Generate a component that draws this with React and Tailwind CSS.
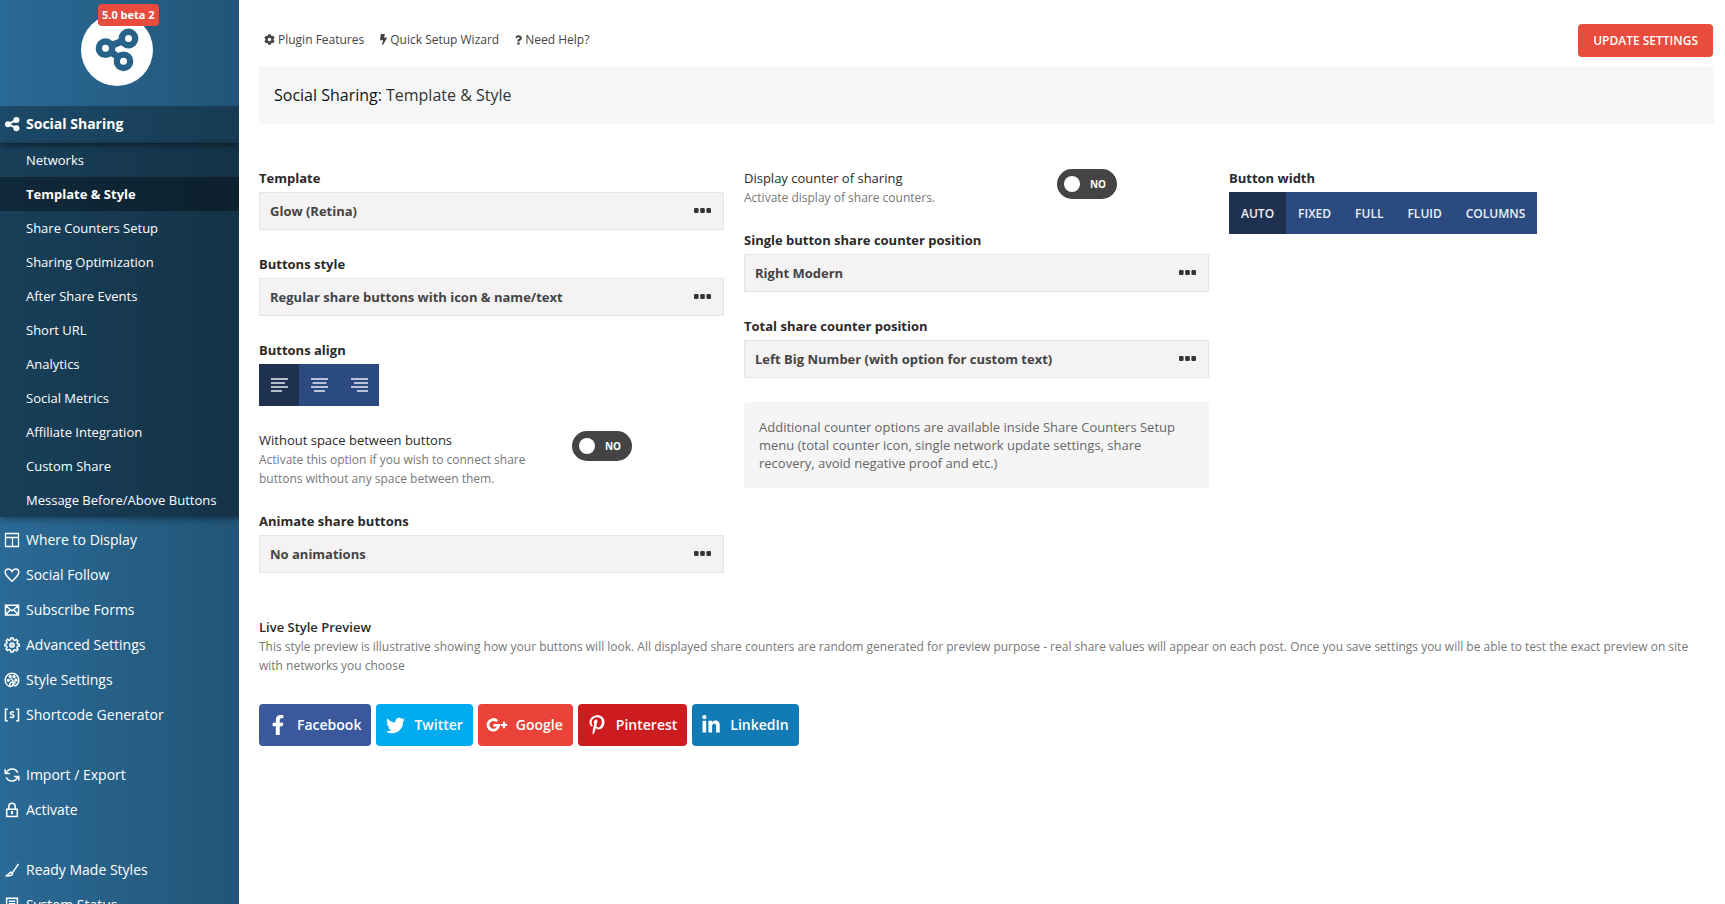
import React from 'react';
import { FaBolt, FaCog, FaFacebookF, FaLinkedinIn, FaPinterestP, FaQuestion, FaTwitter } from 'react-icons/fa';

const Icon = ({ children, size = 16, className = '' }) => (
  <svg
    width={size}
    height={size}
    viewBox="0 0 16 16"
    fill="none"
    stroke="currentColor"
    strokeWidth="1.5"
    className={`shrink-0 ${className}`}
    aria-hidden="true"
  >
    {children}
  </svg>
);

const ShareIcon = () => (
  <Icon>
    <path d="M4 8.200 12.500 4M4 8.200l8.500 4" strokeWidth="2" />
    <g fill="currentColor" stroke="none">
      <circle cx="4" cy="8.200" r="3" />
      <circle cx="12.400" cy="4" r="3" />
      <circle cx="12.400" cy="12.300" r="3" />
    </g>
  </Icon>
);

const LayoutIcon = () => (
  <Icon>
    <path d="M1.500 1.500h13v13h-13zM1.500 5.500h13M8.500 5.500v9" strokeWidth="1.300" />
  </Icon>
);

const HeartIcon = () => (
  <Icon>
    <path d="M8 14.200C5.600 12 1.200 8.700 1.200 5.300 1.200 3.200 2.700 1.900 4.500 1.900 6 1.900 7.200 2.800 8 4.400c.8-1.600 2-2.500 3.500-2.500 1.800 0 3.300 1.300 3.300 3.400 0 3.400-4.400 6.700-6.800 8.900z" />
  </Icon>
);

const MailIcon = () => (
  <Icon>
    <path d="M1.500 3.200h13v9.800h-13zM1.500 3.500 8 8.800l6.500-5.300M1.600 12.800l4.700-5M14.400 12.800 9.700 7.800" />
  </Icon>
);

const GearIcon = () => (
  <Icon>
    <path d="M6.900 1h2.200l.4 1.900 1.300.5 1.600-1 1.500 1.500-1 1.600.5 1.300 1.900.4v1.900l-1.900.4-.5 1.300 1 1.600-1.500 1.500-1.600-1-1.300.5L9.100 15H6.900l-.4-1.900-1.300-.5-1.600 1-1.500-1.500 1-1.600-.5-1.300L.9 8.900V7.200l1.700-.5.5-1.300-1-1.600 1.500-1.500 1.600 1 1.300-.5z" />
    <circle cx="8" cy="8" r="2.100" />
    <circle cx="8" cy="8" r=".3" />
  </Icon>
);

const PaletteIcon = () => (
  <Icon>
    <path d="M6.500 14.600C3.500 14.100 1.200 11.400 1.200 8 1.200 4.200 4.200 1.200 8 1.200s6.800 3 6.800 6.800c0 2.300-1.200 4.400-3 5.600-1.400.6-2.400-.4-1.900-1.900" />
    <path d="M6.500 14.600c-.9-1.200-1-2.700-.1-3.900 1.100-1 2.600-.4 2.800.9.100 1.500-.9 2.500-2.700 3zM6.500 6.300l5 5.200" />
    <circle cx="4.300" cy="8.300" r=".9" />
    <circle cx="6.200" cy="4.600" r=".9" />
    <circle cx="10" cy="4.700" r=".9" />
    <circle cx="12" cy="8" r=".9" />
  </Icon>
);

const ShortcodeIcon = () => (
  <Icon>
    <path d="M3.800 2.200H1.500v11.600h2.300M12.200 2.200h2.300v11.600h-2.300" />
    <path d="M10 5.300C8.500 4.500 6.200 4.800 6.300 6.200c.1 1.600 3.600 1.100 3.600 2.900 0 1.700-2.400 1.800-4 .9" />
  </Icon>
);

const SyncIcon = () => (
  <Icon>
    <path d="M2.300 6.200C3.100 3.600 5.400 2 8 2c2.500 0 4.800 1.400 5.800 3.800M13.700 9.800C12.900 12.400 10.600 14 8 14c-2.500 0-4.800-1.400-5.800-3.800M1.200 2.200v4.300H6M14.800 13.800V9.500H10" />
  </Icon>
);

const LockIcon = () => (
  <Icon>
    <path d="M2.700 7.200h10.600v7.300H2.700zM4.800 7V4.400C4.800 2.600 6.100 1.300 8 1.300s3.200 1.300 3.200 3.100V7" />
    <path d="M8 9v3.200" strokeWidth="2" />
  </Icon>
);

const BrushIcon = () => (
  <Icon>
    <path d="M14.500 1.800 8.600 10.600M6.700 10.200l2 1.600c-.6 1.800-3.200 2.400-7 2.200 2.400-.5 3.200-2.800 5-3.800z" />
  </Icon>
);

const StatusIcon = () => (
  <Icon>
    <path d="M2.600 1.200h10.800v12.600H2.600zM4.800 4.200h6.400M4.800 6.700h6.400M4.800 9.200h4" />
  </Icon>
);

const GooglePlusIcon = () => (
  <svg width="22" height="16" viewBox="0 0 22 16" fill="none" stroke="currentColor" aria-hidden="true">
    <path d="M11.200 4.200A5.300 5.300 0 1 0 12.600 8.400H7.500" strokeWidth="2.800" />
    <path d="M18 4.800v6.400M14.800 8h6.400" strokeWidth="2.200" />
  </svg>
);

// brand mark in the sidebar
const Logo = () => (
  <svg width="72" height="72" viewBox="0 0 72 72" aria-hidden="true">
    <circle cx="36" cy="36" r="36" fill="#ffffff" />
    <g stroke="#286289" fill="none">
      <path d="M24.500 34 47.500 24.500M26 35 42.500 47" strokeWidth="7" />
      <g fill="#ffffff" strokeWidth="6.400">
        <circle cx="24.500" cy="34.200" r="6.700" />
        <circle cx="47.500" cy="24.500" r="6.700" />
        <circle cx="42.500" cy="47.300" r="6.700" />
      </g>
    </g>
  </svg>
);

const subMenu = [
  'Networks',
  'Template & Style',
  'Share Counters Setup',
  'Sharing Optimization',
  'After Share Events',
  'Short URL',
  'Analytics',
  'Social Metrics',
  'Affiliate Integration',
  'Custom Share',
  'Message Before/Above Buttons',
];

const menuGroups = [
  [
    { label: 'Where to Display', icon: LayoutIcon },
    { label: 'Social Follow', icon: HeartIcon },
    { label: 'Subscribe Forms', icon: MailIcon },
    { label: 'Advanced Settings', icon: GearIcon },
    { label: 'Style Settings', icon: PaletteIcon },
    { label: 'Shortcode Generator', icon: ShortcodeIcon },
  ],
  [
    { label: 'Import / Export', icon: SyncIcon },
    { label: 'Activate', icon: LockIcon },
  ],
  [
    { label: 'Ready Made Styles', icon: BrushIcon },
    { label: 'System Status', icon: StatusIcon },
  ],
];

const networks = [
  { name: 'Facebook', color: 'bg-[#3a589b]', icon: <FaFacebookF size={20} /> },
  { name: 'Twitter', color: 'bg-[#00abf0]', icon: <FaTwitter size={19} /> },
  { name: 'Google', color: 'bg-[#eb4339]', icon: <GooglePlusIcon /> },
  { name: 'Pinterest', color: 'bg-[#cd1c1f]', icon: <FaPinterestP size={20} /> },
  { name: 'LinkedIn', color: 'bg-[#127bb6]', icon: <FaLinkedinIn size={20} /> },
];

const Sidebar = () => (
  <aside className="sticky top-0 h-screen w-[239px] shrink-0 overflow-hidden bg-linear-to-r from-[#2a6a96] to-[#225577] text-white">
    <div className="relative flex h-[106px] justify-center pt-[14px] pr-[5px]">
      <Logo />
      <span className="absolute top-1 left-[98px] rounded-sm bg-[#e94c3d] px-1 text-[11px] leading-[22px] font-bold">
        5.0 beta 2
      </span>
    </div>
    <nav>
      <a
        href="#social-sharing"
        className="relative z-10 flex h-[37px] items-center gap-[6px] bg-black/30 pb-0.5 pl-1 text-sm font-bold shadow-[0_4px_5px_-1px_rgba(0,0,0,0.4)]"
      >
        <ShareIcon />
        Social Sharing
      </a>
      <ul className="bg-black/40 shadow-[0_2px_7px_rgba(0,0,0,0.4)]">
        {subMenu.map((item) => (
          <li key={item}>
            <a
              href="#submenu"
              className={`flex h-[34px] items-center pt-0.5 pl-[26px] text-[13px] whitespace-nowrap ${
                item === 'Template & Style' ? 'bg-black/35 font-bold' : ''
              }`}
            >
              {item}
            </a>
          </li>
        ))}
      </ul>
      <div className="flex flex-col gap-[25px] pt-[5px]">
        {menuGroups.map((group, i) => (
          <ul key={i}>
            {group.map(({ label, icon: MenuIcon }) => (
              <li key={label}>
                <a href="#menu" className="flex h-[35px] items-center gap-[6px] pl-1 text-sm">
                  <MenuIcon />
                  {label}
                </a>
              </li>
            ))}
          </ul>
        ))}
      </div>
    </nav>
  </aside>
);

const labelClass = 'block text-[13px] leading-5 text-[#2a2a2a]';
const hintClass = 'text-xs leading-[19px] text-[#777777]';

const SelectField = ({ id, label, value }) => (
  <div className="mb-6">
    <label htmlFor={id} className={`${labelClass} mb-1 font-bold`}>
      {label}
    </label>
    <div className="relative">
      <select
        id={id}
        defaultValue={value}
        className="h-[38px] w-full appearance-none border border-[#e5e5e5] bg-[#f4f2f3] pt-0.5 pr-10 pl-[10px] text-[13px] font-bold text-[#444444]"
      >
        <option>{value}</option>
      </select>
      <svg
        width="17"
        height="5"
        viewBox="0 0 17 5"
        fill="#333333"
        className="pointer-events-none absolute top-4 right-[13px]"
        aria-hidden="true"
      >
        <rect width="4.600" height="5" rx="1.300" />
        <rect x="6.200" width="4.600" height="5" rx="1.300" />
        <rect x="12.400" width="4.600" height="5" rx="1.300" />
      </svg>
    </div>
  </div>
);

const ToggleField = ({ id, label, hint }) => (
  <div className="mb-[23px] flex items-start">
    <div className="w-2/3 pr-8">
      <label htmlFor={id} className={`${labelClass} font-medium`}>
        {label}
      </label>
      <p className={hintClass}>{hint}</p>
    </div>
    <label
      htmlFor={id}
      className="mt-px ml-[3px] flex h-[30px] w-[60px] cursor-pointer items-center justify-between rounded-full bg-[#444444] pr-[11px] pl-[7px]"
    >
      <input id={id} type="checkbox" className="h-4 w-4 appearance-none rounded-full bg-white" />
      <span className="text-[10px] font-bold text-white">NO</span>
    </label>
  </div>
);

const AlignIcon = ({ d }) => (
  <svg width="17" height="14" viewBox="0 0 17 14" fill="none" stroke="#e8ecf4" strokeWidth="1.400" aria-hidden="true">
    <path d={d} />
  </svg>
);

const alignments = [
  { name: 'Left', d: 'M0 1h17M0 5h14M0 9h17M0 13h11' },
  { name: 'Center', d: 'M0 1h17M1.500 5h14M0 9h17M3 13h11' },
  { name: 'Right', d: 'M0 1h17M3 5h14M0 9h17M6 13h11' },
];

const widths = ['AUTO', 'FIXED', 'FULL', 'FLUID', 'COLUMNS'];

const App = () => {
  return (
    <div className="flex min-h-screen bg-white font-['Open_Sans',sans-serif]">
      <Sidebar />
      <main className="min-w-0 flex-1 pr-[11px] pl-5">
        <header className="flex items-center justify-between pt-6 pr-px pb-[9px]">
          <nav className="flex gap-4 pb-0.5 pl-[5px] text-xs font-medium text-[#444444]">
            <a href="#features" className="flex items-center gap-[3px]">
              <FaCog size={11} />
              Plugin Features
            </a>
            <a href="#wizard" className="flex items-center gap-[3px]">
              <FaBolt size={11} className="w-[7px]" />
              Quick Setup Wizard
            </a>
            <a href="#help" className="flex items-center gap-[3px]">
              <FaQuestion size={10} className="w-[7px]" />
              Need Help?
            </a>
          </nav>
          <button type="button" className="h-[33px] rounded-[4px] bg-[#e94c3d] px-[15px] text-xs font-semibold text-white">
            UPDATE SETTINGS
          </button>
        </header>

        <h1 className="mb-11 flex h-[58px] items-center gap-1 bg-[#f5f6f8] px-[15px] text-base font-medium text-[#111111]">
          Social Sharing: <span className="font-normal text-[#333333]">Template &amp; Style</span>
        </h1>

        <section className="grid grid-cols-3">
          <div className="pr-5">
            <SelectField id="template" label="Template" value="Glow (Retina)" />
            <SelectField id="style" label="Buttons style" value="Regular share buttons with icon & name/text" />
            <div className="mb-6">
              <h2 className={`${labelClass} mb-1 font-bold`}>Buttons align</h2>
              <div className="flex">
                {alignments.map(({ name, d }, i) => (
                  <button
                    key={name}
                    type="button"
                    aria-label={name}
                    className={`flex h-[42px] w-10 items-center justify-end pr-[11px] ${i === 0 ? 'bg-[#1f3150]' : 'bg-[#2b4a80]'}`}
                  >
                    <AlignIcon d={d} />
                  </button>
                ))}
              </div>
            </div>
            <ToggleField
              id="nospace"
              label="Without space between buttons"
              hint="Activate this option if you wish to connect share buttons without any space between them."
            />
            <SelectField id="animate" label="Animate share buttons" value="No animations" />
          </div>

          <div className="pr-5">
            <ToggleField id="counter" label="Display counter of sharing" hint="Activate display of share counters." />
            <SelectField id="single" label="Single button share counter position" value="Right Modern" />
            <SelectField
              id="total"
              label="Total share counter position"
              value="Left Big Number (with option for custom text)"
            />
            <p className="rounded-[3px] bg-[#f5f5f5] px-[15px] py-4 text-[13px] leading-[18px] text-[#666666]">
              Additional counter options are available inside Share Counters Setup menu (total counter icon, single
              network update settings, share recovery, avoid negative proof and etc.)
            </p>
          </div>

          <div className="pr-5">
            <h2 className={`${labelClass} mb-1 font-bold`}>Button width</h2>
            <div className="flex">
              {widths.map((item, i) => (
                <button
                  key={item}
                  type="button"
                  className={`h-[42px] px-3 pt-0.5 text-xs font-semibold text-[#eef1f6] ${i === 0 ? 'bg-[#1f3150]' : 'bg-[#2b4a80]'}`}
                >
                  {item}
                </button>
              ))}
            </div>
          </div>
        </section>

        <section className="pt-5">
          <h2 className={`${labelClass} font-semibold`}>Live Style Preview</h2>
          <p className={hintClass}>
            This style preview is illustrative showing how your buttons will look. All displayed share counters are
            random generated for preview purpose - real share values will appear on each post. Once you save settings
            you will be able to test the exact preview on site with networks you choose
          </p>
          <div className="mt-[29px] flex gap-[5px]">
            {networks.map(({ name, color, icon }) => (
              <button
                key={name}
                type="button"
                className={`flex h-[42px] items-center rounded-[4px] pr-[10px] text-sm font-semibold text-white ${color}`}
              >
                <span className="flex w-[38px] justify-center">{icon}</span>
                {name}
              </button>
            ))}
          </div>
        </section>
      </main>
    </div>
  );
};

export default App;
